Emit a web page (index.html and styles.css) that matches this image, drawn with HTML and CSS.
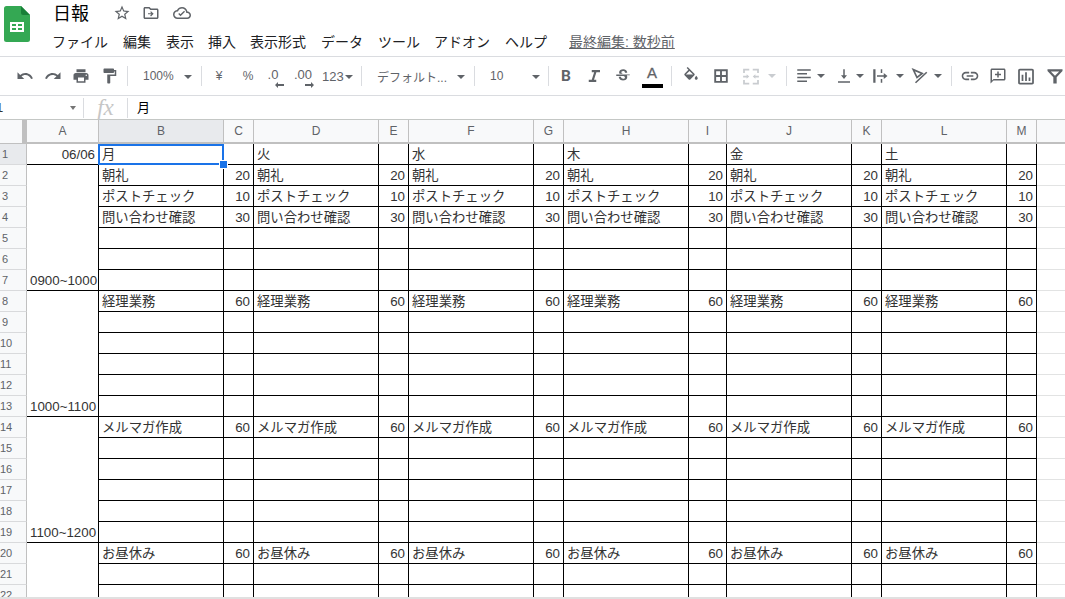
FILE: index.html
```html
<!DOCTYPE html>
<html lang="ja">
<head>
<meta charset="utf-8">
<title>日報</title>
<link rel="stylesheet" href="styles.css">
</head>
<body>
<svg class="sprite" width="0" height="0">
  <symbol id="undo" viewBox="0 0 24 24"><path d="M12.5 8c-2.65 0-5.05.99-6.9 2.6L2 7v9h9l-3.62-3.62c1.39-1.16 3.16-1.88 5.12-1.88 3.54 0 6.55 2.31 7.6 5.5l2.37-.78C21.08 11.03 17.15 8 12.5 8z"/></symbol>
  <symbol id="redo" viewBox="0 0 24 24"><path d="M18.4 10.6C16.55 8.99 14.15 8 11.5 8c-4.65 0-8.58 3.03-9.96 7.22L3.9 16c1.05-3.19 4.05-5.5 7.6-5.5 1.95 0 3.73.72 5.12 1.88L13 16h9V7l-3.6 3.6z"/></symbol>
  <symbol id="print" viewBox="0 0 24 24"><path d="M19 8H5c-1.66 0-3 1.34-3 3v6h4v4h12v-4h4v-6c0-1.66-1.34-3-3-3zm-3 11H8v-5h8v5zm3-7c-.55 0-1-.45-1-1s.45-1 1-1 1 .45 1 1-.45 1-1 1zm-1-9H6v4h12V3z"/></symbol>
  <symbol id="paint" viewBox="0 0 24 24"><path d="M18 4V3c0-.55-.45-1-1-1H5c-.55 0-1 .45-1 1v4c0 .55.45 1 1 1h12c.55 0 1-.45 1-1V6h1v4H9v11c0 .55.45 1 1 1h2c.55 0 1-.45 1-1v-9h8V4h-3z"/></symbol>
  <symbol id="star" viewBox="0 0 24 24"><path d="M22 9.24l-7.19-.62L12 2 9.19 8.63 2 9.24l5.46 4.73L5.82 21 12 17.27 18.18 21l-1.63-7.03L22 9.24zM12 15.4l-3.76 2.27 1-4.28-3.32-2.88 4.38-.38L12 6.1l1.71 4.04 4.38.38-3.32 2.88 1 4.28L12 15.4z"/></symbol>
  <symbol id="move" viewBox="0 0 24 24"><path d="M20 6h-8l-2-2H4c-1.1 0-2 .9-2 2v12c0 1.1.9 2 2 2h16c1.1 0 2-.9 2-2V8c0-1.1-.9-2-2-2zm0 12H4V6h5.17l2 2H20v10z"/><path d="M12 9.5l3.5 3.5-3.5 3.5-1.1-1.1 1.6-1.6H8v-1.600h4.500l-1.600-1.600z"/></symbol>
  <symbol id="cloud" viewBox="0 0 24 24"><path d="M19.35 10.04C18.67 6.59 15.64 4 12 4 9.11 4 6.6 5.64 5.35 8.04 2.34 8.36 0 10.91 0 14c0 3.31 2.69 6 6 6h13c2.76 0 5-2.24 5-5 0-2.64-2.05-4.78-4.65-4.96zM19 18H6c-2.21 0-4-1.79-4-4 0-2.05 1.53-3.76 3.56-3.97l1.07-.11.5-.95C8.08 7.14 9.94 6 12 6c2.62 0 4.88 1.86 5.39 4.43l.3 1.5 1.53.11c1.56.1 2.78 1.41 2.78 2.96 0 1.65-1.35 3-3 3z"/><path d="M10 16.200l-3-3 1.200-1.200 1.800 1.800 4.800-4.800 1.200 1.200z"/></symbol>
  <symbol id="italic" viewBox="0 0 24 24"><path d="M9 4v3h3.200L9 17H5v3h10v-3h-3l3.200-10H20V4z"/></symbol>
  <symbol id="strike" viewBox="0 0 24 24"><path d="M6.850 7.080C6.850 4.370 9.450 3 12.240 3c1.640 0 3 .49 3.900 1.280.77.65 1.460 1.730 1.460 3.240h-3.010c0-.31-.05-.59-.15-.85-.29-.86-1.200-1.280-2.250-1.280-1.860 0-2.340 1.020-2.340 1.700 0 .48.25.88.74 1.210.38.25.77.48 1.410.7H7.390c-.21-.34-.54-.89-.54-1.920zM21 12v-2H3v2h9.620c1.150.45 1.960.75 1.960 1.970 0 1-.81 1.670-2.280 1.670-1.540 0-2.930-.54-2.930-2.510H6.400c0 .55.08 1.130.24 1.580.81 2.290 3.320 3.300 5.670 3.300 2.250 0 5.300-.88 5.300-4.540 0-.34-.03-1.480-.6-2.470H21z"/></symbol>
  <symbol id="fill" viewBox="0 0 24 24"><path d="M16.560 8.940L7.620 0 6.210 1.410l2.380 2.380-5.150 5.150c-.59.59-.59 1.540 0 2.120l5.500 5.500c.29.29.68.44 1.060.44s.77-.15 1.060-.44l5.500-5.500c.59-.58.59-1.530 0-2.120zM5.210 10L10 5.210 14.790 10H5.210zM19 11.500s-2 2.170-2 3.500c0 1.100.9 2 2 2s2-.9 2-2c0-1.330-2-3.500-2-3.500z"/></symbol>
  <symbol id="borders" viewBox="0 0 24 24"><path fill-rule="evenodd" d="M3 3v18h18V3zM5.500 5.500v5.250h5.250V5.500zM13.250 5.500v5.250h5.250V5.500zM5.500 13.250v5.250h5.250v-5.250zM13.250 13.250v5.250h5.250v-5.250z"/></symbol>
  <symbol id="merge" viewBox="0 0 24 24"><path d="M3 3h7v2H5v3H3zM14 3h7v5h-2V5h-5zM3 16h2v3h5v2H3zM19 16h2v5h-7v-2h5zM3 11h4v-1.500l3 2.500-3 2.500V13H3zM21 11h-4V9.500L14 12l3 2.500V13h4z"/></symbol>
  <symbol id="align" viewBox="0 0 24 24"><path d="M3 3h18v2H3zM3 8h13v2H3zM3 13h18v2H3zM3 18h13v2H3z"/></symbol>
  <symbol id="valign" viewBox="0 0 24 24"><path d="M4 19h16v2H4zM13 3h-2v8H8l4 5 4-5h-3z"/></symbol>
  <symbol id="wrap" viewBox="0 0 24 24"><path d="M3 3h3v18H3zM13 3h2v5h-2zM13 16h2v5h-2zM8 11h9V8l5 4-5 4v-3H8z"/></symbol>
  <symbol id="rotate" viewBox="0 0 24 24"><path d="M3 3.500l12 5-7 5.500zM21 7L6 21" fill="none" stroke="#5f6368" stroke-width="2.200"/></symbol>
  <symbol id="link" viewBox="0 0 24 24"><path d="M3.900 12c0-1.710 1.390-3.100 3.100-3.100h4V7H7c-2.760 0-5 2.240-5 5s2.240 5 5 5h4v-1.900H7c-1.710 0-3.100-1.390-3.100-3.100zM8 13h8v-2H8v2zm9-6h-4v1.900h4c1.710 0 3.100 1.390 3.100 3.100s-1.390 3.100-3.100 3.100h-4V17h4c2.760 0 5-2.240 5-5s-2.240-5-5-5z"/></symbol>
  <symbol id="comment" viewBox="0 0 24 24"><path d="M20 2H4c-1.100 0-2 .9-2 2v18l4-4h14c1.100 0 2-.9 2-2V4c0-1.100-.9-2-2-2zm0 14H6l-2 2V4h16v12z"/><path d="M11 6h2v3h3v2h-3v3h-2v-3H8V9h3z"/></symbol>
  <symbol id="chart" viewBox="0 0 24 24"><path d="M19 3H5c-1.100 0-2 .9-2 2v14c0 1.100.9 2 2 2h14c1.100 0 2-.9 2-2V5c0-1.100-.9-2-2-2zm0 16H5V5h14v14zM7 10h2v7H7zm4-3h2v10h-2zm4 6h2v4h-2z"/></symbol>
  <symbol id="filter" viewBox="0 0 24 24"><path d="M3 4h18v2l-7 7.500V21h-4v-7.500L3 6zm4 2.500l5 5.300 5-5.300z" fill-rule="evenodd"/></symbol>
</svg>

<header class="appbar">
  <svg class="logo" viewBox="0 0 26 36"><path d="M2.500 0H17l9 9v24.500a2.500 2.500 0 0 1-2.500 2.500h-21A2.500 2.500 0 0 1 0 33.500v-31A2.500 2.500 0 0 1 2.500 0z" fill="#34a853"/><path d="M17 0l9 9h-7a2 2 0 0 1-2-2z" fill="#188038"/><path d="M6 16h14v10H6zm2 2v2h4v-2zm6 0v2h4v-2zm-6 4v2h4v-2zm6 0v2h4v-2z" fill="#fff" fill-rule="evenodd"/></svg>
  <div class="appbar-main">
    <div class="title-row">
      <span class="doc-title">日報</span>
      <svg class="title-icon star"><use href="#star"/></svg>
      <svg class="title-icon move"><use href="#move"/></svg>
      <svg class="title-icon cloud"><use href="#cloud"/></svg>
    </div>
    <nav class="menu">
      <span class="m1">ファイル</span><span class="m2">編集</span><span class="m3">表示</span><span class="m4">挿入</span><span class="m5">表示形式</span><span class="m6">データ</span><span class="m7">ツール</span><span class="m8">アドオン</span><span class="m9">ヘルプ</span><span class="last-edit">最終編集: 数秒前</span>
    </nav>
  </div>
</header>

<div class="toolbar">
  <svg class="ic w28"><use href="#undo"/></svg>
  <svg class="ic w28"><use href="#redo"/></svg>
  <svg class="ic w28"><use href="#print"/></svg>
  <svg class="ic w29"><use href="#paint"/></svg>
  <i class="sep ml3"></i>
  <div class="select zoom"><span>100%</span><b class="caret"></b></div>
  <i class="sep"></i>
  <span class="tx yen">¥</span>
  <span class="tx pct">%</span>
  <span class="dec dec1">.0<svg viewBox="0 0 9 6"><path d="M0 3l3-3v2h6v2H3v2z"/></svg></span>
  <span class="dec dec2">.00<svg viewBox="0 0 9 6"><path d="M9 3L6 0v2H0v2h6v2z"/></svg></span>
  <div class="select fmt"><span>123</span><b class="caret"></b></div>
  <i class="sep"></i>
  <div class="select font"><span>デフォルト...</span><b class="caret"></b></div>
  <i class="sep"></i>
  <div class="select size"><span>10</span><b class="caret"></b></div>
  <i class="sep"></i>
  <span class="bold ml3">B</span>
  <svg class="ic w28"><use href="#italic"/></svg>
  <svg class="ic w28 ml1"><use href="#strike"/></svg>
  <div class="textcolor ml1"><span>A</span><b></b></div>
  <i class="sep ml5"></i>
  <svg class="ic w28 ml5"><use href="#fill"/></svg>
  <svg class="ic w28 ml2"><use href="#borders"/></svg>
  <svg class="ic w28 ml2 off big"><use href="#merge"/></svg>
  <b class="caret off ml2"></b>
  <i class="sep ml9"></i>
  <svg class="ic w18 ml8 mid"><use href="#align"/></svg>
  <b class="caret ml3"></b>
  <svg class="ic w18 ml9"><use href="#valign"/></svg>
  <b class="caret ml2"></b>
  <svg class="ic w18 ml6 mid"><use href="#wrap"/></svg>
  <b class="caret ml6"></b>
  <svg class="ic w18 ml6 mid"><use href="#rotate"/></svg>
  <b class="caret ml4"></b>
  <i class="sep ml8"></i>
  <svg class="ic w28 ml4 mid"><use href="#link"/></svg>
  <svg class="ic w28"><use href="#comment"/></svg>
  <svg class="ic w28 big"><use href="#chart"/></svg>
  <svg class="ic w28 ml1 mid"><use href="#filter"/></svg>
</div>

<div class="formula">
  <div class="namebox"><span>1</span><b class="caret small"></b></div>
  <i class="sep"></i>
  <span class="fx">fx</span>
  <i class="sep"></i>
  <span class="fval">月</span>
</div>

<main class="sheet">
<table class="grid">
<colgroup><col class="c-row"><col class="c-a"><col class="c-w"><col class="c-n"><col class="c-w"><col class="c-n"><col class="c-w"><col class="c-n"><col class="c-w"><col class="c-i"><col class="c-w"><col class="c-n"><col class="c-w"><col class="c-n"><col class="c-rest"></colgroup>
<thead><tr><th class="corner"></th><th>A</th><th class="on">B</th><th>C</th><th>D</th><th>E</th><th>F</th><th>G</th><th>H</th><th>I</th><th>J</th><th>K</th><th>L</th><th>M</th><th></th></tr></thead>
<tbody>
<tr><th class="on">1</th><td class="n">06/06</td><td class="sel">月</td><td></td><td>火</td><td></td><td>水</td><td></td><td>木</td><td></td><td>金</td><td></td><td>土</td><td></td><td class="x"></td></tr>
<tr><th>2</th><td class="n merged" rowspan="6">0900~1000</td><td>朝礼</td><td class="n">20</td><td>朝礼</td><td class="n">20</td><td>朝礼</td><td class="n">20</td><td>朝礼</td><td class="n">20</td><td>朝礼</td><td class="n">20</td><td>朝礼</td><td class="n">20</td><td class="x"></td></tr>
<tr><th>3</th><td>ポストチェック</td><td class="n">10</td><td>ポストチェック</td><td class="n">10</td><td>ポストチェック</td><td class="n">10</td><td>ポストチェック</td><td class="n">10</td><td>ポストチェック</td><td class="n">10</td><td>ポストチェック</td><td class="n">10</td><td class="x"></td></tr>
<tr><th>4</th><td>問い合わせ確認</td><td class="n">30</td><td>問い合わせ確認</td><td class="n">30</td><td>問い合わせ確認</td><td class="n">30</td><td>問い合わせ確認</td><td class="n">30</td><td>問い合わせ確認</td><td class="n">30</td><td>問い合わせ確認</td><td class="n">30</td><td class="x"></td></tr>
<tr><th>5</th><td></td><td></td><td></td><td></td><td></td><td></td><td></td><td></td><td></td><td></td><td></td><td></td><td class="x"></td></tr>
<tr><th>6</th><td></td><td></td><td></td><td></td><td></td><td></td><td></td><td></td><td></td><td></td><td></td><td></td><td class="x"></td></tr>
<tr><th>7</th><td></td><td></td><td></td><td></td><td></td><td></td><td></td><td></td><td></td><td></td><td></td><td></td><td class="x"></td></tr>
<tr><th>8</th><td class="n merged" rowspan="6">1000~1100</td><td>経理業務</td><td class="n">60</td><td>経理業務</td><td class="n">60</td><td>経理業務</td><td class="n">60</td><td>経理業務</td><td class="n">60</td><td>経理業務</td><td class="n">60</td><td>経理業務</td><td class="n">60</td><td class="x"></td></tr>
<tr><th>9</th><td></td><td></td><td></td><td></td><td></td><td></td><td></td><td></td><td></td><td></td><td></td><td></td><td class="x"></td></tr>
<tr><th>10</th><td></td><td></td><td></td><td></td><td></td><td></td><td></td><td></td><td></td><td></td><td></td><td></td><td class="x"></td></tr>
<tr><th>11</th><td></td><td></td><td></td><td></td><td></td><td></td><td></td><td></td><td></td><td></td><td></td><td></td><td class="x"></td></tr>
<tr><th>12</th><td></td><td></td><td></td><td></td><td></td><td></td><td></td><td></td><td></td><td></td><td></td><td></td><td class="x"></td></tr>
<tr><th>13</th><td></td><td></td><td></td><td></td><td></td><td></td><td></td><td></td><td></td><td></td><td></td><td></td><td class="x"></td></tr>
<tr><th>14</th><td class="n merged" rowspan="6">1100~1200</td><td>メルマガ作成</td><td class="n">60</td><td>メルマガ作成</td><td class="n">60</td><td>メルマガ作成</td><td class="n">60</td><td>メルマガ作成</td><td class="n">60</td><td>メルマガ作成</td><td class="n">60</td><td>メルマガ作成</td><td class="n">60</td><td class="x"></td></tr>
<tr><th>15</th><td></td><td></td><td></td><td></td><td></td><td></td><td></td><td></td><td></td><td></td><td></td><td></td><td class="x"></td></tr>
<tr><th>16</th><td></td><td></td><td></td><td></td><td></td><td></td><td></td><td></td><td></td><td></td><td></td><td></td><td class="x"></td></tr>
<tr><th>17</th><td></td><td></td><td></td><td></td><td></td><td></td><td></td><td></td><td></td><td></td><td></td><td></td><td class="x"></td></tr>
<tr><th>18</th><td></td><td></td><td></td><td></td><td></td><td></td><td></td><td></td><td></td><td></td><td></td><td></td><td class="x"></td></tr>
<tr><th>19</th><td></td><td></td><td></td><td></td><td></td><td></td><td></td><td></td><td></td><td></td><td></td><td></td><td class="x"></td></tr>
<tr><th>20</th><td class="n merged" rowspan="3"></td><td>お昼休み</td><td class="n">60</td><td>お昼休み</td><td class="n">60</td><td>お昼休み</td><td class="n">60</td><td>お昼休み</td><td class="n">60</td><td>お昼休み</td><td class="n">60</td><td>お昼休み</td><td class="n">60</td><td class="x"></td></tr>
<tr><th>21</th><td></td><td></td><td></td><td></td><td></td><td></td><td></td><td></td><td></td><td></td><td></td><td></td><td class="x"></td></tr>
<tr><th>22</th><td></td><td></td><td></td><td></td><td></td><td></td><td></td><td></td><td></td><td></td><td></td><td></td><td class="x"></td></tr>
</tbody>
</table>
</main>
<div class="bottom"></div>
</body>
</html>
```

FILE: styles.css
```css
* { box-sizing: border-box; }
html, body { margin: 0; height: 100%; overflow: hidden; }
body {
  width: 1065px; height: 599px; display: flex; flex-direction: column;
  background: #fff; color: #202124;
  font-family: "Liberation Sans", "Noto Sans CJK JP", sans-serif;
}
.sprite { position: absolute; }

/* app bar */
.appbar { height: 57px; flex: none; display: flex; border-bottom: 1px solid #dadce0; }
.logo { width: 26px; height: 36px; margin: 6px 0 0 4px; flex: none; }
.appbar-main { margin-left: 23px; flex: 1; }
.title-row { height: 28px; display: flex; align-items: center; }
.doc-title { font-size: 18px; line-height: 26px; color: #000; width: 36px; }
.title-icon { width: 18px; height: 18px; fill: #5f6368; margin-top: -2px; }
.title-icon.star { margin-left: 24px; }
.title-icon.move { margin-left: 11px; }
.title-icon.cloud { margin-left: 13px; }
.menu { display: flex; font-size: 14px; line-height: 20px; margin: 4px 0 0 -1px; color: #202124; white-space: nowrap; }
.menu span { flex: none; }
.m1 { width: 71px; } .m2 { width: 43px; } .m3 { width: 42px; } .m4 { width: 42px; }
.m5 { width: 71px; } .m6 { width: 57px; } .m7 { width: 56px; } .m8 { width: 71px; } .m9 { width: 64px; }
.menu .last-edit { color: #5f6368; text-decoration: underline; }

/* toolbar */
.toolbar { height: 39px; flex: none; display: flex; align-items: center; padding-left: 11px; border-bottom: 1px solid #dadce0; overflow: hidden; white-space: nowrap; }
.ic { height: 18px; fill: #5f6368; flex: none; }
.ic.mid { height: 20px; }
.ic.big { height: 21px; }
.ic.off { fill: #c9ccd0; }
.w28 { width: 28px; } .w29 { width: 29px; } .w18 { width: 18px; }
.ml1 { margin-left: 1px; } .ml2 { margin-left: 2px; } .ml3 { margin-left: 3px; } .ml4 { margin-left: 4px; }
.ml5 { margin-left: 5px; } .ml6 { margin-left: 6px; } .ml8 { margin-left: 8px; } .ml9 { margin-left: 9px; }
.sep { display: block; width: 1px; height: 20px; background: #dadce0; flex: none; }
.caret { display: block; flex: none; width: 10px; height: 4px; position: relative; }
.caret::before { content: ""; display: block; width: 0; height: 0; margin: 0 auto; border: 4px solid transparent; border-top-color: #5f6368; border-bottom-width: 0; }
.caret.off::before { border-top-color: #c9ccd0; }
.caret.small { width: 8px; }
.caret.small::before { border-width: 4px 3px 0; border-top-color: #757575; }
.select { height: 24px; display: flex; align-items: center; justify-content: space-between; font-size: 12px; color: #5f6368; flex: none; padding: 0 8px 0 15px; }
.select .caret { margin-top: 2px; }
.zoom { width: 73px; }
.fmt { width: 41px; padding: 0 9px 0 2px; font-size: 13px; }
.font { width: 112px; }
.size { width: 73px; padding-right: 7px; }
.tx { flex: none; text-align: center; font-size: 12px; color: #5f6368; }
.yen { width: 34px; }
.pct { width: 24px; }
.dec { flex: none; position: relative; height: 24px; font-size: 13px; line-height: 22px; color: #5f6368; text-align: center; }
.dec svg { position: absolute; top: 18px; width: 9px; height: 6px; fill: #5f6368; }
.dec1 { width: 26px; } .dec1 svg { left: 15px; }
.dec2 { width: 34px; } .dec2 svg { left: 19px; }
.bold { width: 28px; flex: none; text-align: center; font-family: Roboto, sans-serif; font-weight: 700; font-size: 15.500px; line-height: 20px; color: #5f6368; }
.textcolor { width: 28px; height: 26px; flex: none; display: flex; flex-direction: column; align-items: center; font-size: 15px; font-weight: 400; line-height: 20px; color: #5f6368; -webkit-text-stroke: .3px #5f6368; }
.textcolor b { display: block; width: 21px; height: 4px; background: #000; margin-top: 1px; }

/* formula bar */
.formula { height: 24px; flex: none; display: flex; align-items: center; border-bottom: 1px solid #c4c7c5; font-size: 13px; }
.namebox { width: 83px; display: flex; justify-content: space-between; align-items: center; padding-right: 6px; color: #333; text-indent: -4px; }
.fx { width: 43px; text-align: center; font-family: "Liberation Serif", serif; font-style: italic; font-size: 23px; color: #c6c6c6; line-height: 22px; }
.fval { margin: -2px 0 0 9px; color: #000; }

/* grid */
.sheet { flex: 1; min-height: 0; overflow: hidden; }
.grid { border-collapse: separate; border-spacing: 0; table-layout: fixed; width: 1065px; font-size: 13.33px; color: #333; }
.c-row { width: 27px; } .c-a { width: 72px; } .c-w { width: 125px; } .c-n { width: 30px; } .c-i { width: 38px; } .c-rest { width: 28px; }
.grid thead th { height: 24px; background: #f8f9fa; color: #5f6368; font-weight: 400; font-size: 12px; border-right: 1px solid #c0c0c0; border-bottom: 2px solid #c0c0c0; padding: 0; }
.grid thead th.corner { border-right: 5px solid #c0c0c0; border-bottom: 1px solid #c0c0c0; }
.grid thead th:last-child { border-right: 0; }
.grid thead th.on { background: #e8eaed; }
.grid tbody th { height: 21px; background: #f8f9fa; color: #5f6368; font-weight: 400; font-size: 11px; border-right: 1px solid #c0c0c0; border-bottom: 1px solid #d9dadc; padding: 0 18px 0 0; text-align: right; white-space: nowrap; overflow: hidden; }
.grid tbody tr:nth-child(n+10) th { padding-right: 16px; }
.grid tbody th.on { background: #e8eaed; }
.grid td { height: 21px; padding: 0 3px 1px 3px; border-right: 1px solid #000; border-bottom: 1px solid #000; vertical-align: bottom; line-height: 17px; white-space: nowrap; overflow: hidden; }
.grid td.n { text-align: right; }
.grid td.x { border-right: 0; border-bottom: 1px solid #e2e3e3; }
.grid td.sel { position: relative; overflow: visible; }
.grid td.sel::before { content: ""; position: absolute; left: -1px; top: 0; right: -1px; bottom: -1px; border: 2px solid #1a73e8; }
.grid td.sel::after { content: ""; position: absolute; right: -4px; bottom: -4px; width: 7px; height: 7px; background: #1a73e8; border: 1px solid #fff; box-sizing: content-box; margin: -1px; }
.bottom { height: 2px; flex: none; background: #e0e0e0; }
```
